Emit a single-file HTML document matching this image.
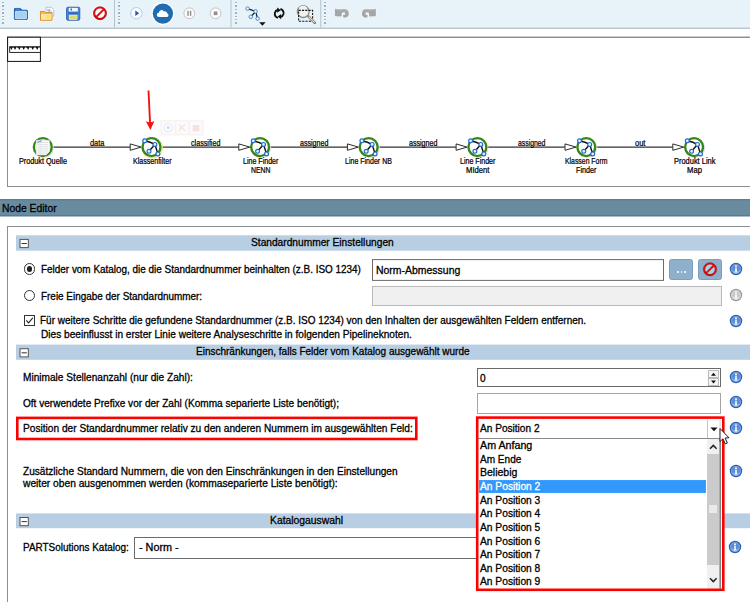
<!DOCTYPE html><html><head><meta charset="utf-8"><title>Node Editor</title><style>html,body{margin:0;padding:0;background:#fff}body{width:750px;height:602px;position:relative;overflow:hidden;font-family:'Liberation Sans',sans-serif;}</style></head><body><svg style="position:absolute;left:-1px;top:-1px" width="752" height="31" viewBox="-1 -1 752 31"><rect x="-2" y="-2" width="760" height="29.8" fill="#e7f2f9"/><rect x="-2" y="27.7" width="760" height="1" fill="#9db1be"/></svg>
<svg style="position:absolute;left:113px;top:-1px" width="3" height="30" viewBox="113 -1 3 30"><rect x="114.0" y="0" width="1" height="27.7" fill="#b3c3ce"/></svg>
<svg style="position:absolute;left:229px;top:-1px" width="4" height="30" viewBox="229 -1 4 30"><rect x="230.5" y="0" width="1" height="27.7" fill="#b3c3ce"/></svg>
<svg style="position:absolute;left:319px;top:-1px" width="4" height="30" viewBox="319 -1 4 30"><rect x="320.3" y="0" width="1" height="27.7" fill="#b3c3ce"/></svg>
<div style="position:absolute;left:2.4px;top:2.4px;width:1.4px;height:22.6px;background:repeating-linear-gradient(to bottom,#a3b0ba 0 1.4px,#f7fbfe 1.4px 2.0px,transparent 2.0px 3.4px)"></div>
<div style="position:absolute;left:118.2px;top:2.4px;width:1.4px;height:22.6px;background:repeating-linear-gradient(to bottom,#a3b0ba 0 1.4px,#f7fbfe 1.4px 2.0px,transparent 2.0px 3.4px)"></div>
<div style="position:absolute;left:235.4px;top:2.4px;width:1.4px;height:22.6px;background:repeating-linear-gradient(to bottom,#a3b0ba 0 1.4px,#f7fbfe 1.4px 2.0px,transparent 2.0px 3.4px)"></div>
<div style="position:absolute;left:324.2px;top:2.4px;width:1.4px;height:22.6px;background:repeating-linear-gradient(to bottom,#a3b0ba 0 1.4px,#f7fbfe 1.4px 2.0px,transparent 2.0px 3.4px)"></div>
<svg style="position:absolute;left:0;top:0" width="750" height="30" viewBox="0 0 750 30"><path d="M14.8 8.4 h5.6 l1.6 1.8 h4.8 q0.6 0 0.6 0.6 v8 q0 0.6 -0.6 0.6 h-11.8 q-0.6 0 -0.6 -0.6 v-10 q0 -0.4 0.4 -0.4 z" fill="#2a69b6" stroke="#f4f9fd" stroke-width="2.2" paint-order="stroke"/><path d="M14.8 8.4 h5.6 l1.6 1.8 h4.8 q0.6 0 0.6 0.6 v8 q0 0.6 -0.6 0.6 h-11.8 q-0.6 0 -0.6 -0.6 v-10 q0 -0.4 0.4 -0.4 z" fill="#2a69b6" stroke="#1f5ca8" stroke-width="0.9"/><rect x="15.4" y="11.3" width="11" height="7.4" rx="0.4" fill="#a6d0f3" stroke="#dcedfb" stroke-width="0.8"/><path d="M15.4 9.2 h4.6" stroke="#5b93d6" stroke-width="0.9"/><path d="M46 7.2 h5.4 l2.4 2.4 v6.6 h-7.8 z" fill="#f7f9fc" stroke="#f4f9fd" stroke-width="2" paint-order="stroke"/><path d="M46 7.2 h5.4 l2.4 2.4 v6.6 h-7.8 z" fill="#f7f9fc" stroke="#a7b4c6" stroke-width="0.8"/><path d="M48 9.4 v1.6 M49.6 9.4 v1.6 M48 11.8 h3.4" stroke="#4c86d0" stroke-width="0.9"/><path d="M40.4 11.4 h4 l1 1.2 h6.6 v7.6 h-11.6 z" fill="#f6c866" stroke="#f4f9fd" stroke-width="2" paint-order="stroke"/><path d="M40.4 11.4 h4 l1 1.2 h6.6 v7.6 h-11.6 z" fill="#f3b95a" stroke="#e08a28" stroke-width="1" stroke-linejoin="round"/><rect x="41.6" y="14.6" width="9.4" height="4.6" fill="#f7e36e" stroke="#fdf3c8" stroke-width="0.7"/><rect x="41.6" y="14.6" width="4" height="4.6" fill="#fbeeb0"/><rect x="66.6" y="7.2" width="13.2" height="13" rx="1.3" fill="#5f97dc" stroke="#f4f9fd" stroke-width="2.4"/><rect x="66.6" y="7.2" width="13.2" height="13" rx="1.3" fill="#4f8ad6" stroke="#2c62b4" stroke-width="1.0"/><rect x="68.8" y="7.9" width="9" height="3.6" fill="#f2f7fd"/><rect x="70.6" y="8.4" width="1.3" height="2.2" fill="#2c62b4"/><rect x="68" y="12.4" width="10.4" height="1.6" fill="#2f68bb"/><rect x="69.4" y="15.2" width="7.6" height="4.2" fill="#d9dc6c" stroke="#f1f5dc" stroke-width="0.7"/><circle cx="100" cy="13.2" r="7.9" fill="#f3f9fd"/><circle cx="100" cy="13.2" r="5.8" fill="#fbfbfd" stroke="#e01010" stroke-width="2.0"/><path d="M95.89882 17.30118 L104.10118 9.09882" stroke="#e01010" stroke-width="2.0"/><circle cx="100" cy="13.2" r="6.6499999999999995" fill="none" stroke="#7a0808" stroke-opacity="0.55" stroke-width="0.5"/><path d="M94.78 15.809999999999999 A5.8 5.8 0 0 0 102.61 18.419999999999998" stroke="#9c0a0a" stroke-width="1.2" fill="none" opacity="0.55"/><circle cx="136.4" cy="13.2" r="5.7" fill="#f9fbfe" stroke="#b4cbe6" stroke-width="1.0"/><path d="M135.3 10.5 L139.2 13.2 L135.3 15.9 z" fill="#2558ad"/><circle cx="162.9" cy="13.6" r="11.4" fill="#ffffff"/><circle cx="162.9" cy="13.6" r="10.2" fill="#1f6cb0"/><g transform="translate(162.9 13.6) scale(0.8) translate(-163.2 -13.6)"><path d="M158.3 17.8 a2.6 2.6 0 0 1 -0.2 -5.2 a3.3 3.3 0 0 1 6.2 -1.6 a2.9 2.9 0 0 1 4.2 2.3 a2.3 2.3 0 0 1 -0.3 4.5 z" fill="#fff"/></g><circle cx="189.3" cy="13.3" r="5.4" fill="#fbfbfb" stroke="#c4c4c4" stroke-width="1.0"/><rect x="187.3" y="10.8" width="1.4" height="5" fill="#8e8e8e"/><rect x="189.9" y="10.8" width="1.4" height="5" fill="#8e8e8e"/><circle cx="215.6" cy="13.3" r="5.4" fill="#fbfbfb" stroke="#c4c4c4" stroke-width="1.0"/><rect x="213.8" y="11.5" width="3.6" height="3.6" fill="#8e8e8e"/><path d="M247.6 8.6 L255.6 11.4 L250.8 16.8 M255.6 11.4 L257.6 18.6" stroke="#1a1a1a" stroke-width="1.25" fill="none"/><circle cx="247.6" cy="8.6" r="1.75" fill="#eef5fc" stroke="#3b7fc9" stroke-width="0.9"/><circle cx="255.6" cy="11.4" r="1.75" fill="#eef5fc" stroke="#3b7fc9" stroke-width="0.9"/><circle cx="250.8" cy="16.8" r="1.75" fill="#eef5fc" stroke="#3b7fc9" stroke-width="0.9"/><circle cx="257.6" cy="18.6" r="1.75" fill="#eef5fc" stroke="#3b7fc9" stroke-width="0.9"/><path d="M259.2 22.2 h6.4 l-3.2 3.6 z" fill="#111"/><path d="M278 17.9 Q274.2 16.4 274.9 12.8 Q275.5 10.4 277.8 10" stroke="#111" stroke-width="1.8" fill="none"/><path d="M277.2 7.6 L280.8 10.2 L277.2 12.8 z" fill="#111"/><path d="M280.4 8.9 Q284.2 10.4 283.5 14 Q282.9 16.4 280.6 16.8" stroke="#111" stroke-width="1.8" fill="none"/><path d="M281.2 19.2 L277.6 16.6 L281.2 14 z" fill="#111"/><circle cx="303.2" cy="11.6" r="5.9" fill="#f1f1f1" stroke="#8a8a8a" stroke-width="1.3"/><path d="M299 8.2 A5 5 0 0 1 307 8.2" stroke="#ffffff" stroke-width="1" fill="none"/><rect x="298.6" y="10.4" width="14" height="10.8" fill="none" stroke="#1a1a1a" stroke-width="1.1" stroke-dasharray="2.2 1.1"/><path d="M308.6 16.6 L314.8 22.8" stroke="#7c7468" stroke-width="2.6" stroke-linecap="round"/><path d="M309 17 L314.4 22.4" stroke="#e9dcc4" stroke-width="1.1" stroke-linecap="round"/><g transform="translate(334.9,0)"><path d="M0 8.7 L5.6 9.5 Q13.9 7.8 13.9 13.4 Q13.9 17.7 8.6 17.7 L8 15.3 Q10.6 15 10.4 13.2 Q9.8 11.4 6.9 12.8 L6.6 16.5 L0 16.3 z" fill="#a3a5a6" stroke="#f3f8fb" stroke-width="1.4" paint-order="stroke"/><path d="M0.6 9.4 L5.6 10.1 Q12.8 8.8 13.2 12.6" stroke="#b9bbbc" stroke-width="1" fill="none"/></g><g transform="translate(375.79999999999995,0) scale(-1,1)"><path d="M0 8.7 L5.6 9.5 Q13.9 7.8 13.9 13.4 Q13.9 17.7 8.6 17.7 L8 15.3 Q10.6 15 10.4 13.2 Q9.8 11.4 6.9 12.8 L6.6 16.5 L0 16.3 z" fill="#a3a5a6" stroke="#f3f8fb" stroke-width="1.4" paint-order="stroke"/><path d="M0.6 9.4 L5.6 10.1 Q12.8 8.8 13.2 12.6" stroke="#b9bbbc" stroke-width="1" fill="none"/></g></svg>
<div style="position:absolute;left:7px;top:37px;width:750px;height:150px;border:1px solid #8a8f94;border-right:none;box-sizing:border-box;background:#fff"></div>
<div style="position:absolute;left:7px;top:36px;width:750px;height:1px;background:#c9cdd0"></div>
<svg style="position:absolute;left:5px;top:35px" width="38" height="29" viewBox="5 35 38 29"><rect x="7.6" y="37.2" width="32.8" height="24.2" fill="#fff" stroke="#111" stroke-width="1"/><rect x="9.7" y="46.7" width="30.7" height="5.7" fill="#fff" stroke="#111" stroke-width="0.9"/><path d="M10.2 47.4 h29.6" stroke="#444" stroke-width="0.9" stroke-dasharray="1.4 0.8"/><path d="M9.9 47 h3 l-1.5 3.1 z" fill="#111"/><path d="M13.5 47 h3 l-1.5 3.1 z" fill="#111"/><path d="M17.8 47 h3 l-1.5 3.1 z" fill="#111"/><path d="M22.2 47 h3 l-1.5 3.1 z" fill="#111"/><path d="M26.6 47 h3 l-1.5 3.1 z" fill="#111"/><path d="M31.200000000000003 47 h3 l-1.5 3.1 z" fill="#111"/><path d="M35.7 47 h3 l-1.5 3.1 z" fill="#111"/></svg>
<svg style="position:absolute;left:0;top:80px" width="750" height="110" viewBox="0 80 750 110"><path d="M52.8 147.1 H130.0" stroke="#333" stroke-width="1.1"/><path d="M130.2 143.9 L141.2 147.1 L130.2 150.29999999999998 z" fill="#fff" stroke="#222" stroke-width="0.95"/><path d="M161.5 147.1 H238.60000000000002" stroke="#333" stroke-width="1.1"/><path d="M238.8 143.9 L249.8 147.1 L238.8 150.29999999999998 z" fill="#fff" stroke="#222" stroke-width="0.95"/><path d="M270.1 147.1 H347.2" stroke="#333" stroke-width="1.1"/><path d="M347.4 143.9 L358.4 147.1 L347.4 150.29999999999998 z" fill="#fff" stroke="#222" stroke-width="0.95"/><path d="M378.7 147.1 H455.9" stroke="#333" stroke-width="1.1"/><path d="M456.09999999999997 143.9 L467.09999999999997 147.1 L456.09999999999997 150.29999999999998 z" fill="#fff" stroke="#222" stroke-width="0.95"/><path d="M487.4 147.1 H564.8" stroke="#333" stroke-width="1.1"/><path d="M565.0 143.9 L576.0 147.1 L565.0 150.29999999999998 z" fill="#fff" stroke="#222" stroke-width="0.95"/><path d="M596.3 147.1 H672.6" stroke="#333" stroke-width="1.1"/><path d="M672.8000000000001 143.9 L683.8000000000001 147.1 L672.8000000000001 150.29999999999998 z" fill="#fff" stroke="#222" stroke-width="0.95"/><rect x="160.3" y="120.1" width="43.4" height="15.4" fill="#f7f3f3"/><rect x="162" y="121.4" width="12.6" height="12.6" fill="#fcfbfb"/><rect x="176.4" y="121.4" width="11.6" height="12.6" fill="#fcfbfb"/><rect x="190" y="121.4" width="12" height="12.6" fill="#fcfbfb"/><circle cx="168.2" cy="127.6" r="4.1" fill="#fbfdff" stroke="#e6eef7" stroke-width="1.3"/><circle cx="168.2" cy="127.6" r="1.5" fill="#c9dcf1"/><path d="M179 124.4 Q183 127.6 179 130.8 M185.4 124.4 L181.4 127.6 L185.4 130.8" stroke="#f4e3e3" stroke-width="1.3" fill="none"/><rect x="192.6" y="125" width="6.6" height="6.4" fill="#f6e0e0"/><path d="M148.5 90.5 L150.1 124" stroke="#f01616" stroke-width="1.9"/><path d="M145.8 121.3 Q150 123.2 154.4 121 L150.4 130 z" fill="#f01616"/><circle cx="43.699999999999996" cy="148.0" r="9.6" fill="none" stroke="#e4e4e4" stroke-width="1.2"/><circle cx="42.8" cy="147.1" r="8.95" fill="#fdfefb" stroke="#34851a" stroke-width="2.35"/><path d="M36.199999999999996 140.29999999999998 h13.2 v11.4 l-3.2 3.2 h-10 z" fill="#fbfbfb" stroke="#dcdcdc" stroke-width="0.7"/><path d="M37.4 142.5 h10.6" stroke="#d9dbde" stroke-width="0.8"/><path d="M37.4 144.6 h10.6" stroke="#d9dbde" stroke-width="0.8"/><path d="M37.4 146.7 h10.6" stroke="#d9dbde" stroke-width="0.8"/><path d="M37.4 148.8 h10.6" stroke="#d9dbde" stroke-width="0.8"/><path d="M37.4 150.9 h10.6" stroke="#d9dbde" stroke-width="0.8"/><path d="M37.4 153.0 h10.6" stroke="#d9dbde" stroke-width="0.8"/><path d="M40.199999999999996 141.5 v12" stroke="#e1e3e6" stroke-width="0.7"/><path d="M37.4 142.5 l4.4 -1.8" stroke="#7fb0ee" stroke-width="1.4"/><circle cx="152.2" cy="147.79999999999998" r="9.5" fill="none" stroke="#ecdc50" stroke-width="2.4"/><circle cx="152.4" cy="148.0" r="9.6" fill="none" stroke="#e4e4e4" stroke-width="1.2"/><circle cx="151.5" cy="147.1" r="8.95" fill="#fdfefb" stroke="#34851a" stroke-width="2.35"/><path d="M144.7 140.79999999999998 Q150.5 141.9 154.9 144.4 L149.0 151.29999999999998 M154.9 144.4 L157.9 153.9" stroke="#111" stroke-width="1.45" fill="none"/><circle cx="144.7" cy="140.79999999999998" r="1.95" fill="#e6f2fe" stroke="#1f6acb" stroke-width="1.15"/><circle cx="154.9" cy="144.4" r="1.95" fill="#e6f2fe" stroke="#1f6acb" stroke-width="1.15"/><circle cx="149.0" cy="151.29999999999998" r="1.95" fill="#e6f2fe" stroke="#1f6acb" stroke-width="1.15"/><circle cx="157.9" cy="153.9" r="1.95" fill="#e6f2fe" stroke="#1f6acb" stroke-width="1.15"/><circle cx="261.0" cy="148.0" r="9.6" fill="none" stroke="#e4e4e4" stroke-width="1.2"/><circle cx="260.1" cy="147.1" r="8.95" fill="#fdfefb" stroke="#34851a" stroke-width="2.35"/><path d="M253.3 140.79999999999998 Q259.1 141.9 263.5 144.4 L257.6 151.29999999999998 M263.5 144.4 L266.5 153.9" stroke="#111" stroke-width="1.45" fill="none"/><circle cx="253.3" cy="140.79999999999998" r="1.95" fill="#e6f2fe" stroke="#1f6acb" stroke-width="1.15"/><circle cx="263.5" cy="144.4" r="1.95" fill="#e6f2fe" stroke="#1f6acb" stroke-width="1.15"/><circle cx="257.6" cy="151.29999999999998" r="1.95" fill="#e6f2fe" stroke="#1f6acb" stroke-width="1.15"/><circle cx="266.5" cy="153.9" r="1.95" fill="#e6f2fe" stroke="#1f6acb" stroke-width="1.15"/><circle cx="369.59999999999997" cy="148.0" r="9.6" fill="none" stroke="#e4e4e4" stroke-width="1.2"/><circle cx="368.7" cy="147.1" r="8.95" fill="#fdfefb" stroke="#34851a" stroke-width="2.35"/><path d="M361.9 140.79999999999998 Q367.7 141.9 372.09999999999997 144.4 L366.2 151.29999999999998 M372.09999999999997 144.4 L375.09999999999997 153.9" stroke="#111" stroke-width="1.45" fill="none"/><circle cx="361.9" cy="140.79999999999998" r="1.95" fill="#e6f2fe" stroke="#1f6acb" stroke-width="1.15"/><circle cx="372.09999999999997" cy="144.4" r="1.95" fill="#e6f2fe" stroke="#1f6acb" stroke-width="1.15"/><circle cx="366.2" cy="151.29999999999998" r="1.95" fill="#e6f2fe" stroke="#1f6acb" stroke-width="1.15"/><circle cx="375.09999999999997" cy="153.9" r="1.95" fill="#e6f2fe" stroke="#1f6acb" stroke-width="1.15"/><circle cx="478.29999999999995" cy="148.0" r="9.6" fill="none" stroke="#e4e4e4" stroke-width="1.2"/><circle cx="477.4" cy="147.1" r="8.95" fill="#fdfefb" stroke="#34851a" stroke-width="2.35"/><path d="M470.59999999999997 140.79999999999998 Q476.4 141.9 480.79999999999995 144.4 L474.9 151.29999999999998 M480.79999999999995 144.4 L483.79999999999995 153.9" stroke="#111" stroke-width="1.45" fill="none"/><circle cx="470.59999999999997" cy="140.79999999999998" r="1.95" fill="#e6f2fe" stroke="#1f6acb" stroke-width="1.15"/><circle cx="480.79999999999995" cy="144.4" r="1.95" fill="#e6f2fe" stroke="#1f6acb" stroke-width="1.15"/><circle cx="474.9" cy="151.29999999999998" r="1.95" fill="#e6f2fe" stroke="#1f6acb" stroke-width="1.15"/><circle cx="483.79999999999995" cy="153.9" r="1.95" fill="#e6f2fe" stroke="#1f6acb" stroke-width="1.15"/><circle cx="587.1999999999999" cy="148.0" r="9.6" fill="none" stroke="#e4e4e4" stroke-width="1.2"/><circle cx="586.3" cy="147.1" r="8.95" fill="#fdfefb" stroke="#34851a" stroke-width="2.35"/><path d="M579.5 140.79999999999998 Q585.3 141.9 589.6999999999999 144.4 L583.8 151.29999999999998 M589.6999999999999 144.4 L592.6999999999999 153.9" stroke="#111" stroke-width="1.45" fill="none"/><circle cx="579.5" cy="140.79999999999998" r="1.95" fill="#e6f2fe" stroke="#1f6acb" stroke-width="1.15"/><circle cx="589.6999999999999" cy="144.4" r="1.95" fill="#e6f2fe" stroke="#1f6acb" stroke-width="1.15"/><circle cx="583.8" cy="151.29999999999998" r="1.95" fill="#e6f2fe" stroke="#1f6acb" stroke-width="1.15"/><circle cx="592.6999999999999" cy="153.9" r="1.95" fill="#e6f2fe" stroke="#1f6acb" stroke-width="1.15"/><circle cx="695.0" cy="148.0" r="9.6" fill="none" stroke="#e4e4e4" stroke-width="1.2"/><circle cx="694.1" cy="147.1" r="8.95" fill="#fdfefb" stroke="#34851a" stroke-width="2.35"/><path d="M687.3000000000001 140.79999999999998 Q693.1 141.9 697.5 144.4 L691.6 151.29999999999998 M697.5 144.4 L700.5 153.9" stroke="#111" stroke-width="1.45" fill="none"/><circle cx="687.3000000000001" cy="140.79999999999998" r="1.95" fill="#e6f2fe" stroke="#1f6acb" stroke-width="1.15"/><circle cx="697.5" cy="144.4" r="1.95" fill="#e6f2fe" stroke="#1f6acb" stroke-width="1.15"/><circle cx="691.6" cy="151.29999999999998" r="1.95" fill="#e6f2fe" stroke="#1f6acb" stroke-width="1.15"/><circle cx="700.5" cy="153.9" r="1.95" fill="#e6f2fe" stroke="#1f6acb" stroke-width="1.15"/></svg>
<svg style="position:absolute;left:-1px;top:198px" width="752" height="20" viewBox="-1 198 752 20"><rect x="-2" y="199.2" width="760" height="17.1" fill="#688b9f"/><rect x="-2" y="199.2" width="760" height="1" fill="#52768c"/><rect x="-2" y="215.3" width="760" height="1" fill="#52768c"/></svg>
<div style="position:absolute;left:7px;top:226px;width:750px;height:400px;border:1px solid #8a8f94;border-right:none;border-bottom:none;box-sizing:border-box;background:#fff"></div>
<svg style="position:absolute;left:15px;top:234px" width="742" height="18" viewBox="15 234 742 18"><rect x="16" y="235.3" width="740" height="15.4" fill="#b8cfe3"/></svg>
<svg style="position:absolute;left:18px;top:237px" width="12" height="13" viewBox="18 237 12 13"><rect x="20" y="239.4" width="8.3" height="8.2" fill="#fff" stroke="#555" stroke-width="1"/><rect x="21.6" y="243.0" width="5.2" height="1" fill="#333"/></svg>
<svg style="position:absolute;left:15px;top:343px" width="742" height="18" viewBox="15 343 742 18"><rect x="16" y="344.6" width="740" height="15.2" fill="#b8cfe3"/></svg>
<svg style="position:absolute;left:18px;top:347px" width="12" height="12" viewBox="18 347 12 12"><rect x="20" y="348.70000000000005" width="8.3" height="8.2" fill="#fff" stroke="#555" stroke-width="1"/><rect x="21.6" y="352.30000000000007" width="5.2" height="1" fill="#333"/></svg>
<svg style="position:absolute;left:15px;top:512px" width="742" height="18" viewBox="15 512 742 18"><rect x="16" y="513.4" width="740" height="14.8" fill="#b8cfe3"/></svg>
<svg style="position:absolute;left:18px;top:516px" width="12" height="12" viewBox="18 516 12 12"><rect x="20" y="517.5" width="8.3" height="8.2" fill="#fff" stroke="#555" stroke-width="1"/><rect x="21.6" y="521.1" width="5.2" height="1" fill="#333"/></svg>
<div style="position:absolute;left:23.599999999999998px;top:263.2px;width:11.6px;height:11.6px;border:1px solid #333;border-radius:50%;box-sizing:border-box;background:#fff"></div>
<div style="position:absolute;left:26.599999999999998px;top:266.2px;width:5.6px;height:5.6px;border-radius:50%;background:#222"></div>
<div style="position:absolute;left:23.599999999999998px;top:289.59999999999997px;width:11.6px;height:11.6px;border:1px solid #333;border-radius:50%;box-sizing:border-box;background:#fff"></div>
<div style="position:absolute;left:24px;top:315px;width:11px;height:11px;border:1px solid #333;box-sizing:border-box;background:#fff"></div>
<svg style="position:absolute;left:24px;top:315px" width="11" height="11"><path d="M2.3 5.4 L4.5 7.8 L8.8 2.8" stroke="#222" stroke-width="1.1" fill="none"/></svg>
<svg style="position:absolute;left:371px;top:258px" width="294" height="24" viewBox="371 258 294 24"><rect x="372.5" y="259.6" width="291" height="20.8" fill="#fff" stroke="#6b6b6b" stroke-width="1"/></svg>
<div style="position:absolute;left:669px;top:259px;width:24px;height:21px;background:#8eb0cc;border:1px solid #7a9fbe;border-radius:2.5px;box-sizing:border-box"></div>
<div style="position:absolute;left:676.5px;top:271px;width:9px;height:1.6px;background:repeating-linear-gradient(to right,#e9f1f8 0 1.8px,transparent 1.8px 3.6px)"></div>
<div style="position:absolute;left:698px;top:259px;width:24px;height:21px;background:#8eb0cc;border:1px solid #7a9fbe;border-radius:2.5px;box-sizing:border-box"></div>
<svg style="position:absolute;left:698px;top:259px" width="24" height="21" viewBox="698 259 24 21"><circle cx="710" cy="269.3" r="5.8" fill="#9fd6ee" stroke="#e01010" stroke-width="2.0"/><path d="M705.89882 273.40118 L714.10118 265.19882" stroke="#e01010" stroke-width="2.0"/><circle cx="710" cy="269.3" r="6.6499999999999995" fill="none" stroke="#7a0808" stroke-opacity="0.55" stroke-width="0.5"/><path d="M704.78 271.91 A5.8 5.8 0 0 0 712.61 274.52000000000004" stroke="#9c0a0a" stroke-width="1.2" fill="none" opacity="0.55"/></svg>
<div style="position:absolute;left:372px;top:286px;width:350px;height:19.6px;border:1px solid #b9b9b9;box-sizing:border-box;background:#f0f0f0"></div>
<svg style="position:absolute;left:728.3px;top:261.4px" width="16" height="16" viewBox="-8 -8 16 16"><circle cx="0" cy="0" r="5.6" fill="#5a8dd3" stroke="#2d60b0" stroke-width="1.2"/><path d="M-4.6 1.2 A4.8 4.8 0 0 0 4.6 1.2 Q0 2.6 -4.6 1.2 z" fill="#8db3e6" opacity="0.75"/><circle cx="0" cy="0" r="4.5" fill="none" stroke="#8db3e6" stroke-width="0.8" opacity="0.7"/><circle cx="0" cy="-2.8" r="0.95" fill="#fff"/><path d="M-0.75 -1.3 h1.5 v3.6 l0.9 1.1 h-3.3 l0.9 -1.1 z" fill="#fff"/></svg>
<svg style="position:absolute;left:728.3px;top:287px" width="16" height="16" viewBox="-8 -8 16 16"><circle cx="0" cy="0" r="5.6" fill="#c9c9c9" stroke="#9b9b9b" stroke-width="1.2"/><path d="M-4.6 1.2 A4.8 4.8 0 0 0 4.6 1.2 Q0 2.6 -4.6 1.2 z" fill="#dcdcdc" opacity="0.75"/><circle cx="0" cy="0" r="4.5" fill="none" stroke="#dcdcdc" stroke-width="0.8" opacity="0.7"/><circle cx="0" cy="-2.8" r="0.95" fill="#fff"/><path d="M-0.75 -1.3 h1.5 v3.6 l0.9 1.1 h-3.3 l0.9 -1.1 z" fill="#fff"/></svg>
<svg style="position:absolute;left:728.3px;top:312.6px" width="16" height="16" viewBox="-8 -8 16 16"><circle cx="0" cy="0" r="5.6" fill="#5a8dd3" stroke="#2d60b0" stroke-width="1.2"/><path d="M-4.6 1.2 A4.8 4.8 0 0 0 4.6 1.2 Q0 2.6 -4.6 1.2 z" fill="#8db3e6" opacity="0.75"/><circle cx="0" cy="0" r="4.5" fill="none" stroke="#8db3e6" stroke-width="0.8" opacity="0.7"/><circle cx="0" cy="-2.8" r="0.95" fill="#fff"/><path d="M-0.75 -1.3 h1.5 v3.6 l0.9 1.1 h-3.3 l0.9 -1.1 z" fill="#fff"/></svg>
<svg style="position:absolute;left:727.5px;top:369.3px" width="16" height="16" viewBox="-8 -8 16 16"><circle cx="0" cy="0" r="5.6" fill="#5a8dd3" stroke="#2d60b0" stroke-width="1.2"/><path d="M-4.6 1.2 A4.8 4.8 0 0 0 4.6 1.2 Q0 2.6 -4.6 1.2 z" fill="#8db3e6" opacity="0.75"/><circle cx="0" cy="0" r="4.5" fill="none" stroke="#8db3e6" stroke-width="0.8" opacity="0.7"/><circle cx="0" cy="-2.8" r="0.95" fill="#fff"/><path d="M-0.75 -1.3 h1.5 v3.6 l0.9 1.1 h-3.3 l0.9 -1.1 z" fill="#fff"/></svg>
<svg style="position:absolute;left:727.5px;top:394.3px" width="16" height="16" viewBox="-8 -8 16 16"><circle cx="0" cy="0" r="5.6" fill="#5a8dd3" stroke="#2d60b0" stroke-width="1.2"/><path d="M-4.6 1.2 A4.8 4.8 0 0 0 4.6 1.2 Q0 2.6 -4.6 1.2 z" fill="#8db3e6" opacity="0.75"/><circle cx="0" cy="0" r="4.5" fill="none" stroke="#8db3e6" stroke-width="0.8" opacity="0.7"/><circle cx="0" cy="-2.8" r="0.95" fill="#fff"/><path d="M-0.75 -1.3 h1.5 v3.6 l0.9 1.1 h-3.3 l0.9 -1.1 z" fill="#fff"/></svg>
<svg style="position:absolute;left:727.5px;top:419.7px" width="16" height="16" viewBox="-8 -8 16 16"><circle cx="0" cy="0" r="5.6" fill="#5a8dd3" stroke="#2d60b0" stroke-width="1.2"/><path d="M-4.6 1.2 A4.8 4.8 0 0 0 4.6 1.2 Q0 2.6 -4.6 1.2 z" fill="#8db3e6" opacity="0.75"/><circle cx="0" cy="0" r="4.5" fill="none" stroke="#8db3e6" stroke-width="0.8" opacity="0.7"/><circle cx="0" cy="-2.8" r="0.95" fill="#fff"/><path d="M-0.75 -1.3 h1.5 v3.6 l0.9 1.1 h-3.3 l0.9 -1.1 z" fill="#fff"/></svg>
<svg style="position:absolute;left:727.5px;top:463px" width="16" height="16" viewBox="-8 -8 16 16"><circle cx="0" cy="0" r="5.6" fill="#5a8dd3" stroke="#2d60b0" stroke-width="1.2"/><path d="M-4.6 1.2 A4.8 4.8 0 0 0 4.6 1.2 Q0 2.6 -4.6 1.2 z" fill="#8db3e6" opacity="0.75"/><circle cx="0" cy="0" r="4.5" fill="none" stroke="#8db3e6" stroke-width="0.8" opacity="0.7"/><circle cx="0" cy="-2.8" r="0.95" fill="#fff"/><path d="M-0.75 -1.3 h1.5 v3.6 l0.9 1.1 h-3.3 l0.9 -1.1 z" fill="#fff"/></svg>
<svg style="position:absolute;left:727.3px;top:539.2px" width="16" height="16" viewBox="-8 -8 16 16"><circle cx="0" cy="0" r="5.6" fill="#5a8dd3" stroke="#2d60b0" stroke-width="1.2"/><path d="M-4.6 1.2 A4.8 4.8 0 0 0 4.6 1.2 Q0 2.6 -4.6 1.2 z" fill="#8db3e6" opacity="0.75"/><circle cx="0" cy="0" r="4.5" fill="none" stroke="#8db3e6" stroke-width="0.8" opacity="0.7"/><circle cx="0" cy="-2.8" r="0.95" fill="#fff"/><path d="M-0.75 -1.3 h1.5 v3.6 l0.9 1.1 h-3.3 l0.9 -1.1 z" fill="#fff"/></svg>
<div style="position:absolute;left:477px;top:368px;width:244px;height:19px;border:1px solid #6a6a6a;box-sizing:border-box;background:#fff"></div>
<div style="position:absolute;left:707.5px;top:370px;width:11.5px;height:8px;border:1px solid #bbb;box-sizing:border-box;background:#f4f4f4"></div>
<div style="position:absolute;left:707.5px;top:378px;width:11.5px;height:8px;border:1px solid #bbb;box-sizing:border-box;background:#f4f4f4"></div>
<svg style="position:absolute;left:707px;top:369px" width="13" height="18"><path d="M4 6.8 h5 l-2.5 -3 z M4 11.6 h5 l-2.5 3 z" fill="#111"/></svg>
<div style="position:absolute;left:477px;top:393px;width:244px;height:20.5px;border:1px solid #a5a5a5;box-sizing:border-box;background:#fff"></div>
<svg style="position:absolute;left:0;top:410px" width="750" height="40" viewBox="0 410 750 40"><rect x="17.3" y="417.9" width="399" height="21.1" fill="none" stroke="#ff0000" stroke-width="2.6"/></svg>
<div style="position:absolute;left:134px;top:537px;width:587.5px;height:21.6px;border:1px solid #6b6b6b;box-sizing:border-box;background:#fff"></div>
<div style="position:absolute;left:478px;top:419px;width:244px;height:170px;background:#fff"></div>
<div style="position:absolute;left:478px;top:438px;width:242.5px;height:1px;background:#8a8a8a"></div>
<div style="position:absolute;left:706.5px;top:420px;width:1px;height:18px;background:#c4c4c4"></div>
<svg style="position:absolute;left:708px;top:425px" width="12" height="10"><path d="M2.4 2.4 h7.2 l-3.6 3.8 z" fill="#111"/></svg>
<div style="position:absolute;left:707px;top:439px;width:12.3px;height:150px;background:#f0f0f0"></div>
<div style="position:absolute;left:707px;top:454px;width:12.3px;height:111px;background:#cbcbcb"></div>
<div style="position:absolute;left:709.2px;top:505px;width:7.6px;height:8.2px;background:#e9e9e9"></div>
<svg style="position:absolute;left:707px;top:440px" width="13" height="14"><path d="M3 8.8 L6.3 5.4 L9.6 8.8" stroke="#222" stroke-width="1.5" fill="none"/></svg>
<svg style="position:absolute;left:707px;top:573px" width="13" height="14"><path d="M3 5.2 L6.3 8.6 L9.6 5.2" stroke="#222" stroke-width="1.5" fill="none"/></svg>
<div style="position:absolute;left:478.5px;top:480.2px;width:227.5px;height:13px;background:#3398fc;outline:1px dotted #c98a3c;outline-offset:-1px"></div>
<svg style="position:absolute;left:470px;top:410px" width="280" height="192" viewBox="470 410 280 192"><rect x="477.2" y="417.6" width="246.1" height="172.2" fill="none" stroke="#ff0000" stroke-width="2.6"/><rect x="719.4" y="438.5" width="1.5" height="150.5" fill="#777"/><rect x="719.6" y="420" width="1" height="18" fill="#c9d6dd"/></svg>
<svg style="position:absolute;left:718px;top:427px" width="14" height="19" viewBox="0 0 14 19"><path d="M2 1.5 L2 14.5 L5 11.8 L7.3 17 L9.4 16 L7.1 11 L11 10.8 z" fill="#fff" stroke="#222" stroke-width="1"/></svg>
<span style="position:absolute;left:19.07px;-webkit-text-stroke:0.23px #000;top:156.78px;font-size:8.2px;line-height:10.66px;color:#000;white-space:pre;transform:scaleX(0.8846);transform-origin:0 50%;">Produkt Quelle</span>
<span style="position:absolute;left:132.57px;-webkit-text-stroke:0.23px #000;top:156.78px;font-size:8.2px;line-height:10.66px;color:#000;white-space:pre;transform:scaleX(0.8635);transform-origin:0 50%;">Klassenfilter</span>
<span style="position:absolute;left:242.87px;-webkit-text-stroke:0.23px #000;top:156.78px;font-size:8.2px;line-height:10.66px;color:#000;white-space:pre;transform:scaleX(0.8646);transform-origin:0 50%;">Line Finder</span>
<span style="position:absolute;left:250.67px;-webkit-text-stroke:0.23px #000;top:166.28px;font-size:8.2px;line-height:10.66px;color:#000;white-space:pre;transform:scaleX(0.8370);transform-origin:0 50%;">NENN</span>
<span style="position:absolute;left:345.37px;-webkit-text-stroke:0.23px #000;top:156.78px;font-size:8.2px;line-height:10.66px;color:#000;white-space:pre;transform:scaleX(0.8589);transform-origin:0 50%;">Line Finder NB</span>
<span style="position:absolute;left:459.87px;-webkit-text-stroke:0.23px #000;top:156.78px;font-size:8.2px;line-height:10.66px;color:#000;white-space:pre;transform:scaleX(0.8646);transform-origin:0 50%;">Line Finder</span>
<span style="position:absolute;left:465.87px;-webkit-text-stroke:0.23px #000;top:166.28px;font-size:8.2px;line-height:10.66px;color:#000;white-space:pre;transform:scaleX(0.9356);transform-origin:0 50%;">MIdent</span>
<span style="position:absolute;left:564.87px;-webkit-text-stroke:0.23px #000;top:156.78px;font-size:8.2px;line-height:10.66px;color:#000;white-space:pre;transform:scaleX(0.8397);transform-origin:0 50%;">Klassen Form</span>
<span style="position:absolute;left:575.87px;-webkit-text-stroke:0.23px #000;top:166.28px;font-size:8.2px;line-height:10.66px;color:#000;white-space:pre;transform:scaleX(0.8795);transform-origin:0 50%;">Finder</span>
<span style="position:absolute;left:673.87px;-webkit-text-stroke:0.23px #000;top:156.78px;font-size:8.2px;line-height:10.66px;color:#000;white-space:pre;transform:scaleX(0.9100);transform-origin:0 50%;">Produkt Link</span>
<span style="position:absolute;left:686.87px;-webkit-text-stroke:0.23px #000;top:166.28px;font-size:8.2px;line-height:10.66px;color:#000;white-space:pre;transform:scaleX(0.9362);transform-origin:0 50%;">Map</span>
<span style="position:absolute;left:89.87px;-webkit-text-stroke:0.23px #000;top:138.78px;font-size:8.2px;line-height:10.66px;color:#000;white-space:pre;transform:scaleX(0.9048);transform-origin:0 50%;">data</span>
<span style="position:absolute;left:191.37px;-webkit-text-stroke:0.23px #000;top:138.78px;font-size:8.2px;line-height:10.66px;color:#000;white-space:pre;transform:scaleX(0.8733);transform-origin:0 50%;">classified</span>
<span style="position:absolute;left:299.87px;-webkit-text-stroke:0.23px #000;top:138.78px;font-size:8.2px;line-height:10.66px;color:#000;white-space:pre;transform:scaleX(0.8670);transform-origin:0 50%;">assigned</span>
<span style="position:absolute;left:408.87px;-webkit-text-stroke:0.23px #000;top:138.78px;font-size:8.2px;line-height:10.66px;color:#000;white-space:pre;transform:scaleX(0.8670);transform-origin:0 50%;">assigned</span>
<span style="position:absolute;left:517.87px;-webkit-text-stroke:0.23px #000;top:138.78px;font-size:8.2px;line-height:10.66px;color:#000;white-space:pre;transform:scaleX(0.8365);transform-origin:0 50%;">assigned</span>
<span style="position:absolute;left:634.87px;-webkit-text-stroke:0.23px #000;top:138.78px;font-size:8.2px;line-height:10.66px;color:#000;white-space:pre;transform:scaleX(0.9148);transform-origin:0 50%;">out</span>
<span style="position:absolute;left:1.74px;-webkit-text-stroke:0.29px #000;top:202.09px;font-size:10.23px;line-height:13.3px;color:#000;white-space:pre;transform:scaleX(1.0121);transform-origin:0 50%;">Node Editor</span>
<span style="position:absolute;left:251.04px;-webkit-text-stroke:0.29px #000;top:235.89px;font-size:10.23px;line-height:13.3px;color:#000;white-space:pre;transform:scaleX(0.9970);transform-origin:0 50%;">Standardnummer Einstellungen</span>
<span style="position:absolute;left:195.84px;-webkit-text-stroke:0.29px #000;top:345.19px;font-size:10.23px;line-height:13.3px;color:#000;white-space:pre;transform:scaleX(0.9787);transform-origin:0 50%;">Einschränkungen, falls Felder vom Katalog ausgewählt wurde</span>
<span style="position:absolute;left:270.34px;-webkit-text-stroke:0.29px #000;top:513.99px;font-size:10.23px;line-height:13.3px;color:#000;white-space:pre;transform:scaleX(1.0120);transform-origin:0 50%;">Katalogauswahl</span>
<span style="position:absolute;left:40.94px;-webkit-text-stroke:0.29px #000;top:263.19px;font-size:10.23px;line-height:13.3px;color:#000;white-space:pre;transform:scaleX(0.9711);transform-origin:0 50%;">Felder vom Katalog, die die Standardnummer beinhalten (z.B. ISO 1234)</span>
<span style="position:absolute;left:40.94px;-webkit-text-stroke:0.29px #000;top:289.59px;font-size:10.23px;line-height:13.3px;color:#000;white-space:pre;transform:scaleX(0.9714);transform-origin:0 50%;">Freie Eingabe der Standardnummer:</span>
<span style="position:absolute;left:40.34px;-webkit-text-stroke:0.29px #000;top:313.79px;font-size:10.23px;line-height:13.3px;color:#000;white-space:pre;transform:scaleX(0.9759);transform-origin:0 50%;">Für weitere Schritte die gefundene Standardnummer (z.B. ISO 1234) von den Inhalten der ausgewählten Feldern entfernen.</span>
<span style="position:absolute;left:40.54px;-webkit-text-stroke:0.29px #000;top:328.19px;font-size:10.23px;line-height:13.3px;color:#000;white-space:pre;transform:scaleX(0.9891);transform-origin:0 50%;">Dies beeinflusst in erster Linie weitere Analyseschritte in folgenden Pipelineknoten.</span>
<span style="position:absolute;left:376.30px;-webkit-text-stroke:0.30px #000;top:264.19px;font-size:10.7px;line-height:13.91px;color:#000;white-space:pre;transform:scaleX(0.9785);transform-origin:0 50%;">Norm-Abmessung</span>
<span style="position:absolute;left:22.94px;-webkit-text-stroke:0.29px #000;top:370.59px;font-size:10.23px;line-height:13.3px;color:#000;white-space:pre;transform:scaleX(0.9906);transform-origin:0 50%;">Minimale Stellenanzahl (nur die Zahl):</span>
<span style="position:absolute;left:480.04px;-webkit-text-stroke:0.29px #000;top:371.79px;font-size:10.23px;line-height:13.3px;color:#000;white-space:pre;transform:scaleX(0.9887);transform-origin:0 50%;">0</span>
<span style="position:absolute;left:22.94px;-webkit-text-stroke:0.29px #000;top:396.89px;font-size:10.23px;line-height:13.3px;color:#000;white-space:pre;transform:scaleX(0.9845);transform-origin:0 50%;">Oft verwendete Prefixe vor der Zahl (Komma separierte Liste benötigt);</span>
<span style="position:absolute;left:22.94px;-webkit-text-stroke:0.29px #000;top:421.99px;font-size:10.23px;line-height:13.3px;color:#000;white-space:pre;transform:scaleX(0.9932);transform-origin:0 50%;">Position der Standardnummer relativ zu den anderen Nummern im ausgewählten Feld:</span>
<span style="position:absolute;left:22.94px;-webkit-text-stroke:0.29px #000;top:464.59px;font-size:10.23px;line-height:13.3px;color:#000;white-space:pre;transform:scaleX(0.9887);transform-origin:0 50%;">Zusätzliche Standard Nummern, die von den Einschränkungen in den Einstellungen</span>
<span style="position:absolute;left:22.94px;-webkit-text-stroke:0.29px #000;top:476.79px;font-size:10.23px;line-height:13.3px;color:#000;white-space:pre;transform:scaleX(1.0001);transform-origin:0 50%;">weiter oben ausgenommen werden (kommaseparierte Liste benötigt):</span>
<span style="position:absolute;left:22.64px;-webkit-text-stroke:0.29px #000;top:540.79px;font-size:10.23px;line-height:13.3px;color:#000;white-space:pre;transform:scaleX(0.9727);transform-origin:0 50%;">PARTSolutions Katalog:</span>
<span style="position:absolute;left:138.94px;-webkit-text-stroke:0.29px #000;top:540.79px;font-size:10.23px;line-height:13.3px;color:#000;white-space:pre;transform:scaleX(1.0602);transform-origin:0 50%;">- Norm -</span>
<span style="position:absolute;left:479.84px;-webkit-text-stroke:0.29px #000;top:422.09px;font-size:10.23px;line-height:13.3px;color:#000;white-space:pre;transform:scaleX(0.9884);transform-origin:0 50%;">An Position 2</span>
<span style="position:absolute;left:480.04px;-webkit-text-stroke:0.29px #000;top:439.09px;font-size:10.23px;line-height:13.3px;color:#000;white-space:pre;transform:scaleX(1.0465);transform-origin:0 50%;">Am Anfang</span>
<span style="position:absolute;left:480.04px;-webkit-text-stroke:0.29px #000;top:452.72px;font-size:10.23px;line-height:13.3px;color:#000;white-space:pre;transform:scaleX(0.9828);transform-origin:0 50%;">Am Ende</span>
<span style="position:absolute;left:480.04px;-webkit-text-stroke:0.29px #000;top:466.35px;font-size:10.23px;line-height:13.3px;color:#000;white-space:pre;transform:scaleX(1.0261);transform-origin:0 50%;">Beliebig</span>
<span style="position:absolute;left:480.04px;-webkit-text-stroke:0.29px #fff;top:479.98px;font-size:10.23px;line-height:13.3px;color:#fff;white-space:pre;transform:scaleX(1.0017);transform-origin:0 50%;">An Position 2</span>
<span style="position:absolute;left:480.04px;-webkit-text-stroke:0.29px #000;top:493.61px;font-size:10.23px;line-height:13.3px;color:#000;white-space:pre;transform:scaleX(1.0017);transform-origin:0 50%;">An Position 3</span>
<span style="position:absolute;left:480.04px;-webkit-text-stroke:0.29px #000;top:507.24px;font-size:10.23px;line-height:13.3px;color:#000;white-space:pre;transform:scaleX(1.0017);transform-origin:0 50%;">An Position 4</span>
<span style="position:absolute;left:480.04px;-webkit-text-stroke:0.29px #000;top:520.87px;font-size:10.23px;line-height:13.3px;color:#000;white-space:pre;transform:scaleX(1.0017);transform-origin:0 50%;">An Position 5</span>
<span style="position:absolute;left:480.04px;-webkit-text-stroke:0.29px #000;top:534.50px;font-size:10.23px;line-height:13.3px;color:#000;white-space:pre;transform:scaleX(1.0017);transform-origin:0 50%;">An Position 6</span>
<span style="position:absolute;left:480.04px;-webkit-text-stroke:0.29px #000;top:548.13px;font-size:10.23px;line-height:13.3px;color:#000;white-space:pre;transform:scaleX(1.0017);transform-origin:0 50%;">An Position 7</span>
<span style="position:absolute;left:480.04px;-webkit-text-stroke:0.29px #000;top:561.76px;font-size:10.23px;line-height:13.3px;color:#000;white-space:pre;transform:scaleX(1.0017);transform-origin:0 50%;">An Position 8</span>
<span style="position:absolute;left:480.04px;-webkit-text-stroke:0.29px #000;top:575.39px;font-size:10.23px;line-height:13.3px;color:#000;white-space:pre;transform:scaleX(1.0017);transform-origin:0 50%;">An Position 9</span></body></html>
